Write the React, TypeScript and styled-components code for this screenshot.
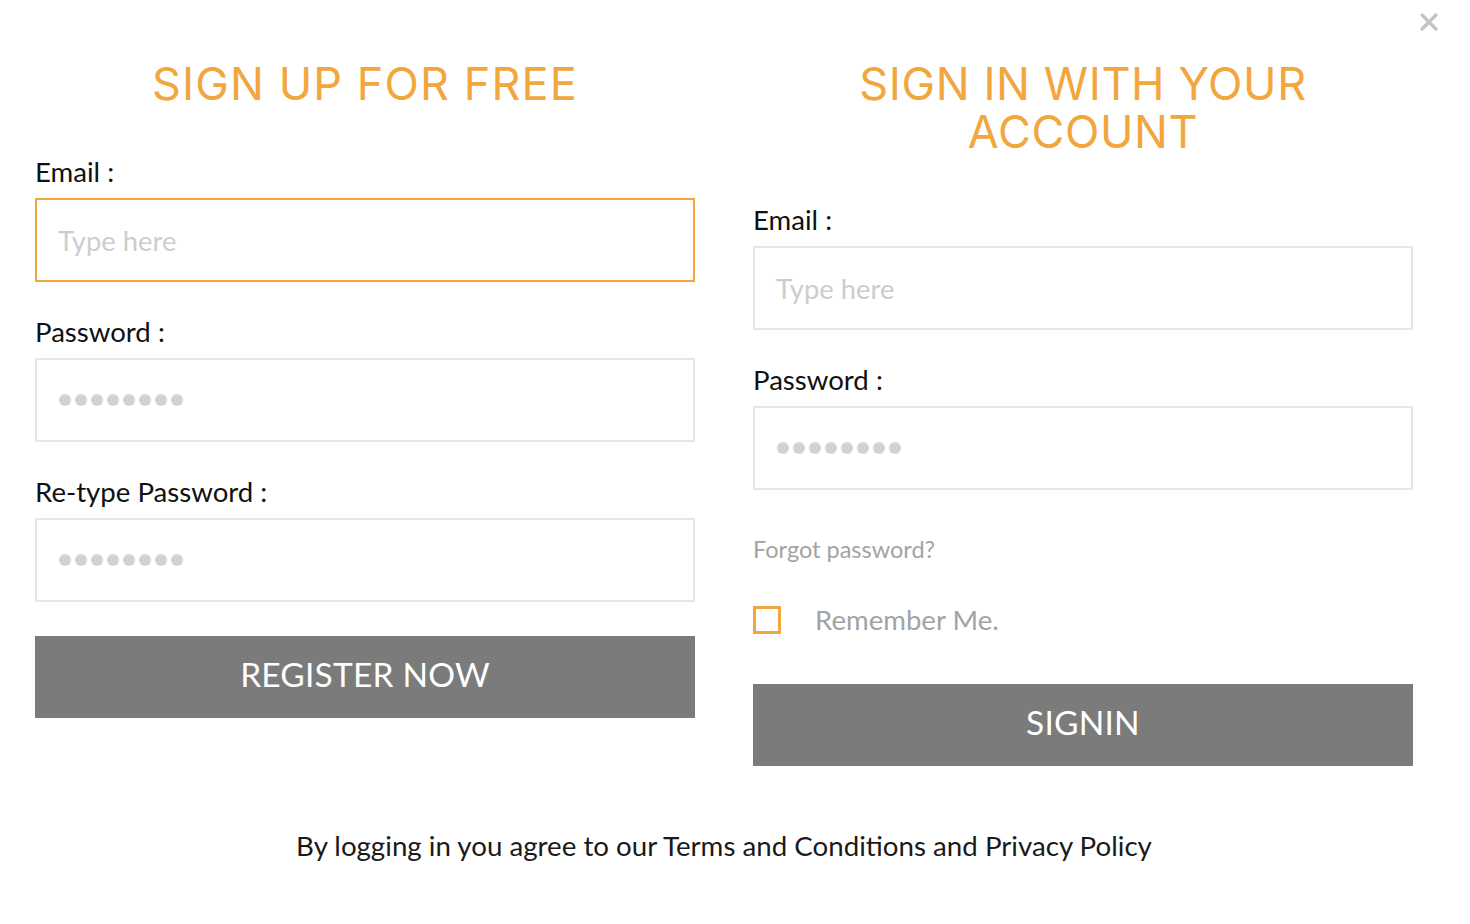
import styled, { createGlobalStyle } from "styled-components"

const GlobalStyle = createGlobalStyle`
  html, body {
    margin: 0;
    padding: 0;
    background: #ffffff;
  }
  * {
    box-sizing: border-box;
  }
`

const orange = "#f2a63e"

const Modal = styled.div`
  position: relative;
  width: 1470px;
  height: 924px;
  padding: 60px 57px 0 35px;
  font-family: Lato, "Open Sans", sans-serif;
`
const Close = styled.button`
  position: absolute;
  top: 8px;
  right: 27px;
  width: 28px;
  height: 28px;
  padding: 0;
  border: none;
  background: none;
  display: flex;
  align-items: center;
  justify-content: center;
  cursor: pointer;
`
const Columns = styled.div`
  display: grid;
  grid-template-columns: 660px 660px;
  column-gap: 58px;
  align-items: start;
`
const Column = styled.div`
  display: flex;
  flex-direction: column;
`
const Heading = styled.h2<{ spacing?: number }>`
  margin: 0 0 46px;
  font-family: Inter, "Open Sans", sans-serif;
  font-weight: 400;
  font-size: 45px;
  line-height: 48px;
  letter-spacing: ${p => p.spacing ?? 0.6}px;
  color: ${orange};
  text-align: center;
  text-transform: uppercase;
`
const Label = styled.label`
  display: block;
  font-size: 27.6px;
  line-height: 36px;
  color: #111;
  margin-bottom: 8px;
`
const Field = styled.div<{ focused?: boolean }>`
  height: 84px;
  border: ${p => (p.focused ? `2px solid ${orange}` : "2px solid #e6e6e6")};
  display: flex;
  align-items: center;
  padding: 0 21px;
  margin-bottom: 32px;
`
const Placeholder = styled.span`
  font-size: 27.4px;
  color: #cdcdcd;
`
const Dots = styled.div`
  display: flex;
  gap: 4px;
  padding-left: 1px;
`
const Dot = styled.span`
  width: 12px;
  height: 12px;
  border-radius: 50%;
  background: #d2d2d2;
`
const Button = styled.button`
  height: 82px;
  width: 100%;
  border: none;
  background: #7b7b7b;
  color: #fff;
  font-family: Lato, sans-serif;
  font-size: 33.5px;
  letter-spacing: 0.2px;
  padding: 0 0 6px;
  margin-top: 2px;
  cursor: pointer;
`
const Forgot = styled.a`
  font-size: 23.5px;
  line-height: 30px;
  color: #a3a3a3;
  margin: 12px 0 39px;
  text-decoration: none;
`
const Remember = styled.label`
  display: flex;
  align-items: center;
  gap: 34px;
  font-size: 27.6px;
  color: #a3a3a3;
  margin-bottom: 46px;
`
const Box = styled.span`
  width: 28px;
  height: 28px;
  border: 3px solid ${orange};
`
const Footer = styled.p`
  margin: 62px 0 0;
  text-align: center;
  font-size: 27.7px;
  line-height: 36px;
  color: #1a1a1a;
`

function Password() {
  return (
    <Dots>
      {Array.from({ length: 8 }).map((_, i) => (
        <Dot key={i} />
      ))}
    </Dots>
  )
}

export default function App() {
  return (
    <>
      <GlobalStyle />
      <Modal>
        <Close aria-label="close">
          <svg width="20" height="20" viewBox="0 0 20 20">
            <path d="M3 3 L17 17 M17 3 L3 17" stroke="#c4c4c4" strokeWidth="3.4" strokeLinecap="round" />
          </svg>
        </Close>
        <Columns>
          <Column>
            <Heading spacing={1.1}>Sign up for free</Heading>
            <Label>Email :</Label>
            <Field focused>
              <Placeholder>Type here</Placeholder>
            </Field>
            <Label>Password :</Label>
            <Field>
              <Password />
            </Field>
            <Label>Re-type Password :</Label>
            <Field>
              <Password />
            </Field>
            <Button>REGISTER NOW</Button>
          </Column>
          <Column>
            <Heading>Sign in with your<br />account</Heading>
            <Label>Email :</Label>
            <Field>
              <Placeholder>Type here</Placeholder>
            </Field>
            <Label>Password :</Label>
            <Field>
              <Password />
            </Field>
            <Forgot href="#">Forgot password?</Forgot>
            <Remember>
              <Box />
              Remember Me.
            </Remember>
            <Button>SIGNIN</Button>
          </Column>
        </Columns>
        <Footer>By logging in you agree to our Terms and Conditions and Privacy Policy</Footer>
      </Modal>
    </>
  )
}
